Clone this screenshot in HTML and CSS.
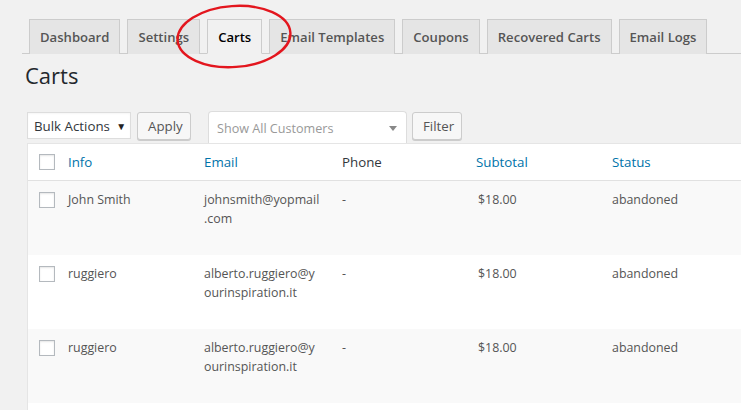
FILE: index.html
```html
<!DOCTYPE html>
<html>
<head>
<meta charset="utf-8">
<link rel="stylesheet" href="styles.css">
</head>
<body>
<div class="page">
  <nav class="tabs">
    <a class="tab">Dashboard</a>
    <a class="tab">Settings</a>
    <a class="tab active">Carts</a>
    <a class="tab">Email Templates</a>
    <a class="tab">Coupons</a>
    <a class="tab">Recovered Carts</a>
    <a class="tab">Email Logs</a>
  </nav>
  <div class="content">
    <h1 class="title">Carts</h1>
    <div class="toolbar">
      <div class="select">Bulk Actions <span class="caret">&#9660;</span></div>
      <button class="btn apply">Apply</button>
      <div class="select2">
        <span class="placeholder">Show All Customers</span>
        <span class="s2arrow"></span>
      </div>
      <button class="btn filter">Filter</button>
    </div>
    <table class="carts">
      <colgroup>
        <col class="c-check"><col class="c-info"><col class="c-email"><col class="c-phone"><col class="c-sub"><col class="c-status">
      </colgroup>
      <thead>
        <tr>
          <th class="check"><span class="cb"></span></th>
          <th><a class="sort">Info</a></th>
          <th><a class="sort">Email</a></th>
          <th class="plain">Phone</th>
          <th><a class="sort">Subtotal</a></th>
          <th><a class="sort">Status</a></th>
        </tr>
      </thead>
      <tbody>
        <tr class="alt">
          <td class="check"><span class="cb"></span></td>
          <td>John Smith</td>
          <td class="email">johnsmith@yopmail.com</td>
          <td>-</td>
          <td class="money">$18.00</td>
          <td>abandoned</td>
        </tr>
        <tr>
          <td class="check"><span class="cb"></span></td>
          <td>ruggiero</td>
          <td class="email">alberto.ruggiero@yourinspiration.it</td>
          <td>-</td>
          <td class="money">$18.00</td>
          <td>abandoned</td>
        </tr>
        <tr class="alt">
          <td class="check"><span class="cb"></span></td>
          <td>ruggiero</td>
          <td class="email">alberto.ruggiero@yourinspiration.it</td>
          <td>-</td>
          <td class="money">$18.00</td>
          <td>abandoned</td>
        </tr>
        <tr>
          <td class="check"><span class="cb"></span></td>
          <td>&nbsp;</td>
          <td class="email">&nbsp;</td>
          <td>&nbsp;</td>
          <td>&nbsp;</td>
          <td>&nbsp;</td>
        </tr>
      </tbody>
    </table>
  </div>
  <svg class="circle" width="140" height="76" viewBox="0 0 140 76">
    <ellipse cx="64" cy="36.5" rx="56.5" ry="30.5" transform="rotate(-4 64 36.5)" fill="none" stroke="#e3161e" stroke-width="2.4"/>
  </svg>
</div>
</body>
</html>
```
FILE: styles.css
```css
html, body {
  margin: 0;
  padding: 0;
  background: #f1f1f1;
  overflow: hidden;
}
body {
  font-family: "Open Sans", "Noto Sans", sans-serif;
  color: #444;
  width: 741px;
  height: 410px;
}
.page {
  position: relative;
  height: 410px;
}
.tabs {
  display: flex;
  gap: 7px;
  margin: 0 0 0 22px;
  padding: 19px 0 0 7px;
  border-bottom: 1px solid #ccc;
}
.tab {
  display: block;
  border: 1px solid #ccc;
  border-bottom: none;
  background: #e5e5e5;
  color: #555;
  font-size: 13.1px;
  font-weight: 600;
  line-height: 24px;
  padding: 5px 10px 5px 10px;
  margin-bottom: -1px;
  white-space: nowrap;
}
.tab.active {
  background: #f1f1f1;
  color: #000;
  border-bottom: 1px solid #f1f1f1;
  padding-bottom: 4px;
}
.content {
  padding-left: 27px;
}
.title {
  margin: 0;
  padding: 6px 0 0 0;
  margin-left: -2px;
  font-size: 22px;
  font-weight: 400;
  line-height: 30px;
  color: #23282d;
}
.toolbar {
  display: flex;
  align-items: flex-start;
  margin-top: 22px;
  height: 31px;
}
.select {
  box-sizing: border-box;
  width: 104px;
  height: 27px;
  background: #fff;
  border: 1px solid #ddd;
  box-shadow: inset 0 1px 2px rgba(0,0,0,.04);
  color: #32373c;
  font-size: 13.3px;
  line-height: 26px;
  padding-left: 6px;
  white-space: nowrap;
}
.caret {
  font-size: 10px;
  color: #222;
  margin-left: 3px;
  vertical-align: 1px;
}
.btn {
  box-sizing: border-box;
  height: 28px;
  margin-left: 6px;
  border: 1px solid #ccc;
  border-radius: 3px;
  background: #f7f7f7;
  box-shadow: 0 1px 0 #ccc;
  color: #555;
  font-family: "Open Sans", "Noto Sans", sans-serif;
  font-size: 13.3px;
  line-height: 26px;
  padding: 0 10px;
}
.apply { width: 54px; }
.filter { width: 50px; margin-left: 5px; }
.select2 {
  box-sizing: border-box;
  width: 199px;
  height: 32px;
  margin: -1px 0 0 17px;
  background: #fff;
  border: 1px solid #ddd;
  border-bottom: none;
  border-radius: 4px 4px 0 0;
  display: flex;
  align-items: center;
  justify-content: space-between;
  padding: 2px 9px 0 8px;
}
.placeholder {
  color: #999;
  font-size: 12.6px;
}
.s2arrow {
  width: 0;
  height: 0;
  border-left: 4px solid transparent;
  border-right: 4px solid transparent;
  border-top: 5px solid #888;
}
.carts {
  width: 780px;
  table-layout: fixed;
  border-collapse: separate;
  border-spacing: 0;
  background: #fff;
  border: 1px solid #e5e5e5;
  border-right: none;
}
.c-check { width: 30px; }
.c-info { width: 136px; }
.c-email { width: 138px; }
.c-phone { width: 134px; }
.c-sub { width: 136px; }
.c-status { width: 206px; }
th, td {
  text-align: left;
  vertical-align: top;
  padding: 0 10px;
}
th {
  font-weight: 400;
  font-size: 13.3px;
  line-height: 19px;
  height: 36px;
  padding-top: 9px;
  padding-bottom: 8px;
  box-sizing: border-box;
  border-bottom: 1px solid #e1e1e1;
  color: #32373c;
}
th .sort { color: #0073aa; }
td {
  font-size: 12.4px;
  line-height: 19px;
  color: #555;
  height: 74px;
  box-sizing: border-box;
  padding-top: 9px;
}
td.money { padding-left: 12px; }
td.email { overflow-wrap: anywhere; }
tr.alt td { background: #f9f9f9; }
th.check, td.check {
  padding: 0 0 0 11px;
}
th.check .cb { margin-top: 10px; }
td.check .cb { margin-top: 11px; }
.cb {
  display: block;
  box-sizing: border-box;
  width: 16px;
  height: 16px;
  border: 1px solid #b4b9be;
  background: #fff;
  box-shadow: inset 0 1px 2px rgba(0,0,0,.1);
}
.circle {
  position: absolute;
  left: 170px;
  top: 0;
  pointer-events: none;
}
```
